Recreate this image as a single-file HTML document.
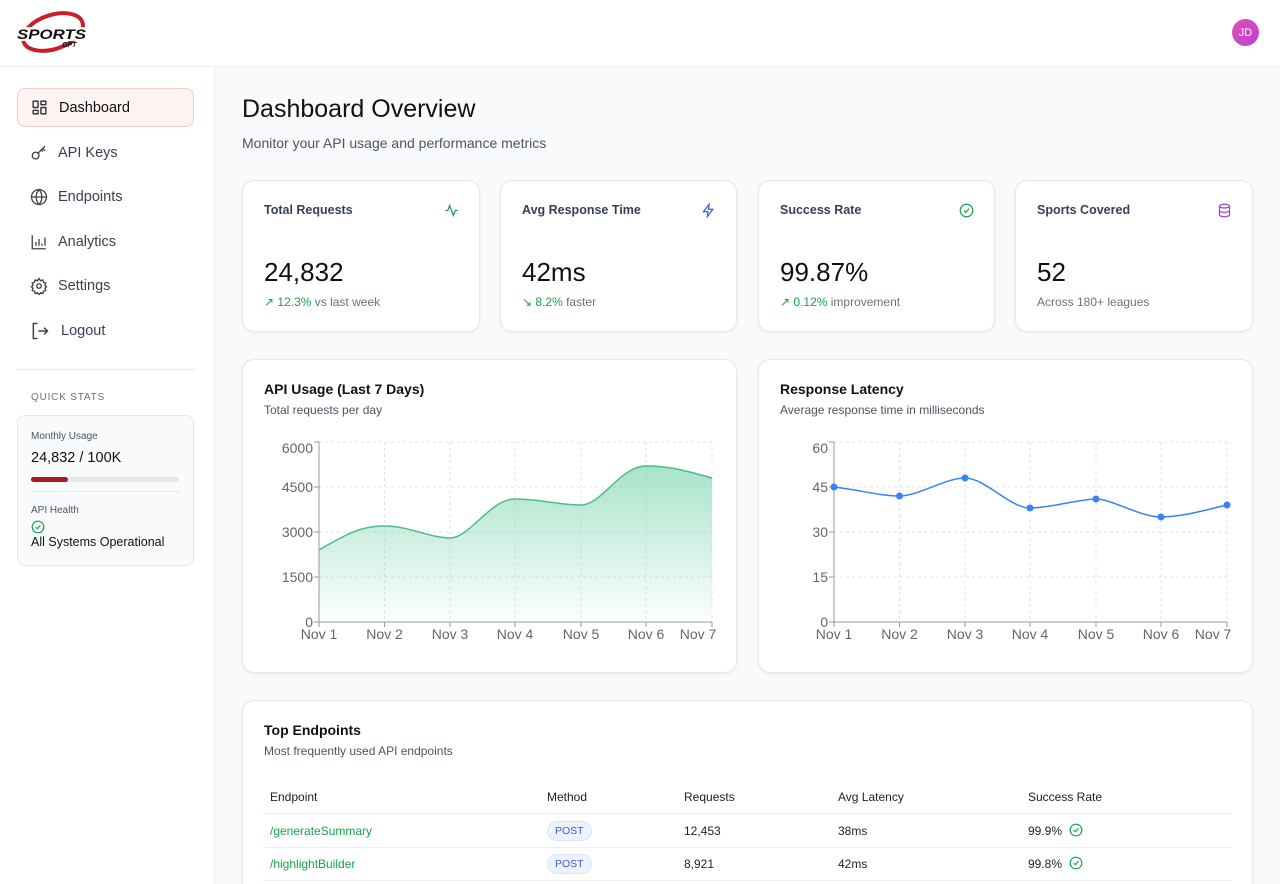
<!DOCTYPE html>
<html><head><meta charset="utf-8"><style>
*{box-sizing:border-box;margin:0;padding:0}
html,body{width:1280px;height:884px;overflow:hidden}
body{background:#f8fafc;font-family:"Liberation Sans",sans-serif;color:#111;position:relative}
.abs{position:absolute}
.header{left:0;top:0;width:1280px;height:67px;background:#fff;border-bottom:1px solid #eceff3}
.side{left:0;top:67px;width:215px;height:817px;background:#fff;border-right:1px solid #eceff3}
.nav{position:absolute;left:17px;width:177px;height:39px;display:flex;align-items:center;font-size:14.5px;color:#374151}
.nav svg{position:absolute;left:13px}
.nav span{position:absolute;left:41px}
.card{position:absolute;background:#fff;border:1px solid #e5e7eb;border-radius:12px;box-shadow:0 1px 3px rgba(0,0,0,.06)}
.ct{position:absolute;left:21px;top:22px;font-size:12.5px;font-weight:bold;color:#374151}
.cv{position:absolute;left:21px;top:76px;font-size:26px;color:#111}
.cs{position:absolute;left:21px;top:114px;font-size:12px;color:#6b7280}
.g{color:#16a34a}
.ic{position:absolute;right:20px;top:22px}
.th{position:absolute;top:790px;font-size:12px;color:#222}
.td{position:absolute;font-size:12px;color:#222}
.td.g{color:#16a34a}
.pill{position:absolute;font-size:10.5px;color:#3b5bdb;background:#eef2ff;border:1px solid #dbe2f5;border-radius:10px;padding:3px 7px}
</style></head><body>
<div class="abs header"></div>
<svg class="abs" style="left:14px;top:8px" width="76" height="48" viewBox="0 0 76 48">
<ellipse cx="39" cy="24" rx="31" ry="17" fill="none" stroke="#c8202a" stroke-width="4" transform="rotate(-18 39 24)"/>
<rect x="2" y="19" width="72" height="14" fill="#fff" opacity="0.9"/>
<text x="3" y="31" font-family="Liberation Sans" font-size="14" font-weight="bold" font-style="italic" fill="#111" textLength="69" lengthAdjust="spacingAndGlyphs">SPORTS</text>
<text x="48" y="39" font-family="Liberation Sans" font-size="7" font-weight="bold" font-style="italic" fill="#111">GPT</text>
</svg>
<div class="abs" style="left:1232px;top:19px;width:27px;height:27px;border-radius:50%;background:linear-gradient(135deg,#e14fb0,#b843d6);color:#fff;font-size:11px;display:flex;align-items:center;justify-content:center">JD</div>
<div class="abs side"></div>
<div class="nav" style="top:88px;background:#fdf3f3;border:1px solid #f3cccc;border-radius:8px"><svg width="17" height="17" viewBox="0 0 24 24" fill="none" stroke="#333" stroke-width="2"><rect x="3" y="3" width="7" height="9" rx="1"/><rect x="14" y="3" width="7" height="5" rx="1"/><rect x="14" y="12" width="7" height="9" rx="1"/><rect x="3" y="16" width="7" height="5" rx="1"/></svg><span style="color:#111">Dashboard</span></div>
<div class="nav" style="top:133px"><svg width="18" height="18" viewBox="0 0 24 24" fill="none" stroke="#444" stroke-width="1.8"><circle cx="7.5" cy="15.5" r="4.5"/><path d="M11 12l9-9M17 6l3 3M15 8l2 2"/></svg><span>API Keys</span></div>
<div class="nav" style="top:177px"><svg width="18" height="18" viewBox="0 0 24 24" fill="none" stroke="#444" stroke-width="1.8"><circle cx="12" cy="12" r="10"/><path d="M2 12h20M12 2a15 15 0 0 1 0 20M12 2a15 15 0 0 0 0 20"/></svg><span>Endpoints</span></div>
<div class="nav" style="top:222px"><svg width="18" height="18" viewBox="0 0 24 24" fill="none" stroke="#444" stroke-width="1.8"><path d="M3 3v18h18M8 17v-5M12 17V8M16 17v-3M20 17V6"/></svg><span>Analytics</span></div>
<div class="nav" style="top:266px"><svg width="18" height="18" viewBox="0 0 24 24" fill="none" stroke="#444" stroke-width="1.8"><circle cx="12" cy="12" r="3"/><path d="M12 2l2 3 3-1 1 3 3 1-1 3 2 2-2 2 1 3-3 1-1 3-3-1-2 3-2-3-3 1-1-3-3-1 1-3-2-2 2-2-1-3 3-1 1-3 3 1z"/></svg><span>Settings</span></div>
<div class="nav" style="top:311px"><svg width="20" height="20" viewBox="0 0 24 24" fill="none" stroke="#444" stroke-width="1.8"><path d="M9 3H4v18h5M10 12h11M17 8l4 4-4 4"/></svg><span style="left:44px">Logout</span></div>
<div class="abs" style="left:17px;top:369px;width:177px;height:1px;background:#e5e7eb"></div>
<div class="abs" style="left:31px;top:392px;font-size:10px;letter-spacing:.8px;color:#6b7280">QUICK STATS</div>
<div class="abs" style="left:17px;top:415px;width:177px;height:151px;background:#f8fafc;border:1px solid #e5e7eb;border-radius:8px"></div>
<div class="abs" style="left:31px;top:431px;font-size:10px;color:#4b5563">Monthly Usage</div>
<div class="abs" style="left:31px;top:450px;font-size:14.5px;color:#111">24,832 / 100K</div>
<div class="abs" style="left:31px;top:477px;width:148px;height:5px;border-radius:3px;background:#e5e7eb"><div style="width:37px;height:5px;border-radius:3px;background:#a51d1d"></div></div>
<div class="abs" style="left:31px;top:491px;width:148px;height:1px;background:#e5e7eb"></div>
<div class="abs" style="left:31px;top:505px;font-size:10px;color:#4b5563">API Health</div>
<svg class="abs" style="left:31px;top:520px" width="14" height="14" viewBox="0 0 24 24" fill="none" stroke="#16a34a" stroke-width="2"><circle cx="12" cy="12" r="10"/><path d="M8 12l3 3 5-6"/></svg>
<div class="abs" style="left:31px;top:535px;font-size:12.5px;color:#111">All Systems Operational</div>

<div class="abs" style="left:242px;top:95px;font-size:25px;color:#111">Dashboard Overview</div>
<div class="abs" style="left:242px;top:135px;font-size:14px;color:#4b5563">Monitor your API usage and performance metrics</div>

<div class="card" style="left:242px;top:180px;width:238px;height:152px"><div class="ct">Total Requests</div><svg class="ic" width="15" height="15" viewBox="0 0 24 24" fill="none" stroke="#16a34a" stroke-width="2"><path d="M2 12h4l3-8 6 16 3-8h4"/></svg><div class="cv">24,832</div><div class="cs"><span class="g">↗ 12.3%</span> vs last week</div></div>
<div class="card" style="left:500px;top:180px;width:237px;height:152px"><div class="ct">Avg Response Time</div><svg class="ic" width="15" height="15" viewBox="0 0 24 24" fill="none" stroke="#3b63d8" stroke-width="2"><path d="M13 2L4 14h7l-1 8 9-12h-7z"/></svg><div class="cv">42ms</div><div class="cs"><span class="g">↘ 8.2%</span> faster</div></div>
<div class="card" style="left:758px;top:180px;width:237px;height:152px"><div class="ct">Success Rate</div><svg class="ic" width="15" height="15" viewBox="0 0 24 24" fill="none" stroke="#16a34a" stroke-width="2"><circle cx="12" cy="12" r="10"/><path d="M8 12l3 3 5-6"/></svg><div class="cv">99.87%</div><div class="cs"><span class="g">↗ 0.12%</span> improvement</div></div>
<div class="card" style="left:1015px;top:180px;width:238px;height:152px"><div class="ct">Sports Covered</div><svg class="ic" width="15" height="15" viewBox="0 0 24 24" fill="none" stroke="#a43fd6" stroke-width="2"><ellipse cx="12" cy="5" rx="8" ry="3"/><path d="M4 5v14c0 1.7 3.6 3 8 3s8-1.3 8-3V5M4 12c0 1.7 3.6 3 8 3s8-1.3 8-3"/></svg><div class="cv">52</div><div class="cs">Across 180+ leagues</div></div>

<div class="card" style="left:242px;top:359px;width:495px;height:314px"><div class="ct" style="font-size:14px;top:21px;color:#111">API Usage (Last 7 Days)</div><div class="cs" style="top:43px;font-size:12px;color:#4b5563">Total requests per day</div></div>
<div class="card" style="left:758px;top:359px;width:495px;height:314px"><div class="ct" style="font-size:14px;top:21px;color:#111">Response Latency</div><div class="cs" style="top:43px;font-size:12px;color:#4b5563">Average response time in milliseconds</div></div>

<svg class="abs" style="left:0;top:0" width="1280" height="884" font-family="Liberation Sans" font-size="14" fill="#666">
<defs><linearGradient id="gr" x1="0" y1="0" x2="0" y2="1"><stop offset="0" stop-color="#6fd1a8" stop-opacity=".6"/><stop offset="1" stop-color="#6fd1a8" stop-opacity=".02"/></linearGradient></defs>
<g stroke="#e3e3e3" stroke-dasharray="3 3">
<path d="M319 442H712M319 487H712M319 532H712M319 577H712M384.5 442V622M450 442V622M515 442V622M581 442V622M646 442V622M712 442V622"/>
<path d="M834 442H1227M834 487H1227M834 532H1227M834 577H1227M899.5 442V622M965 442V622M1030 442V622M1096 442V622M1161 442V622M1227 442V622"/>
</g>
<path d="M319 550C345 535 360 526 384.5 526S430 538 450 538S490 499 515 499S560 505 581 505S620 466 646 466S690 472 712 478V622H319Z" fill="url(#gr)"/>
<path d="M319 550C345 535 360 526 384.5 526S430 538 450 538S490 499 515 499S560 505 581 505S620 466 646 466S690 472 712 478" fill="none" stroke="#4fba8a" stroke-width="1.5"/>
<g stroke="#999" fill="none"><path d="M319 442V622H712M314 442h5M314 487h5M314 532h5M314 577h5M314 622h5M384.5 622v5M450 622v5M515 622v5M581 622v5M646 622v5M712 622v5M319 622v5"/>
<path d="M834 442V622H1227M829 442h5M829 487h5M829 532h5M829 577h5M829 622h5M834 622v5M899.5 622v5M965 622v5M1030 622v5M1096 622v5M1161 622v5M1227 622v5"/></g>
<g text-anchor="end"><text x="313" y="453">6000</text><text x="313" y="492">4500</text><text x="313" y="537">3000</text><text x="313" y="582">1500</text><text x="313" y="627">0</text>
<text x="828" y="453">60</text><text x="828" y="492">45</text><text x="828" y="537">30</text><text x="828" y="582">15</text><text x="828" y="627">0</text></g>
<g text-anchor="middle"><text x="319" y="639">Nov 1</text><text x="384.5" y="639">Nov 2</text><text x="450" y="639">Nov 3</text><text x="515" y="639">Nov 4</text><text x="581" y="639">Nov 5</text><text x="646" y="639">Nov 6</text><text x="698" y="639">Nov 7</text>
<text x="834" y="639">Nov 1</text><text x="899.5" y="639">Nov 2</text><text x="965" y="639">Nov 3</text><text x="1030" y="639">Nov 4</text><text x="1096" y="639">Nov 5</text><text x="1161" y="639">Nov 6</text><text x="1213" y="639">Nov 7</text></g>
<path d="M834 487C860 490 880 496 899.5 496S945 478 965 478S1010 508 1030 508S1080 499 1096 499S1140 517 1161 517S1205 510 1227 505" fill="none" stroke="#3b82f6" stroke-width="1.5"/>
<g fill="#3b82f6"><circle cx="834" cy="487" r="3.5"/><circle cx="899.5" cy="496" r="3.5"/><circle cx="965" cy="478" r="3.5"/><circle cx="1030" cy="508" r="3.5"/><circle cx="1096" cy="499" r="3.5"/><circle cx="1161" cy="517" r="3.5"/><circle cx="1227" cy="505" r="3.5"/></g>
</svg>

<div class="card" style="left:242px;top:700px;width:1011px;height:200px"><div class="ct" style="font-size:14px;top:21px;color:#111">Top Endpoints</div><div class="cs" style="top:43px;font-size:12px;color:#4b5563">Most frequently used API endpoints</div></div>
<div class="th" style="left:270px">Endpoint</div><div class="th" style="left:547px">Method</div><div class="th" style="left:684px">Requests</div><div class="th" style="left:838px">Avg Latency</div><div class="th" style="left:1028px">Success Rate</div>
<div class="abs" style="left:263px;top:813px;width:969px;height:1px;background:#eceff3"></div>
<div class="abs" style="left:263px;top:847px;width:969px;height:1px;background:#eceff3"></div>
<div class="abs" style="left:263px;top:880px;width:969px;height:1px;background:#eceff3"></div>
<div class="td g" style="left:270px;top:824px">/generateSummary</div><div class="pill" style="left:547px;top:821px">POST</div><div class="td" style="left:684px;top:824px">12,453</div><div class="td" style="left:838px;top:824px">38ms</div><div class="td" style="left:1028px;top:824px">99.9%</div>
<div class="td g" style="left:270px;top:857px">/highlightBuilder</div><div class="pill" style="left:547px;top:854px">POST</div><div class="td" style="left:684px;top:857px">8,921</div><div class="td" style="left:838px;top:857px">42ms</div><div class="td" style="left:1028px;top:857px">99.8%</div>
<svg class="abs" style="left:1069px;top:823px" width="14" height="14" viewBox="0 0 24 24" fill="none" stroke="#16a34a" stroke-width="2"><circle cx="12" cy="12" r="10"/><path d="M8 12l3 3 5-6"/></svg>
<svg class="abs" style="left:1069px;top:856px" width="14" height="14" viewBox="0 0 24 24" fill="none" stroke="#16a34a" stroke-width="2"><circle cx="12" cy="12" r="10"/><path d="M8 12l3 3 5-6"/></svg>
</body></html>
